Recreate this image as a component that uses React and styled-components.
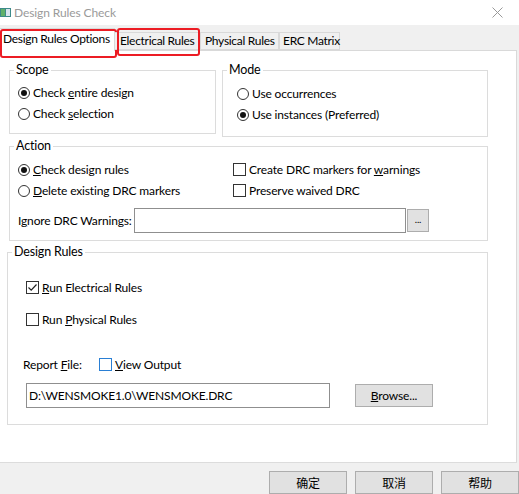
import React from "react";
import styled, { createGlobalStyle } from "styled-components";

const Global = createGlobalStyle`
  html, body { margin: 0; padding: 0; }
  body {
    width: 519px; height: 494px; overflow: hidden; background: #f0f0f0;
    font-family: "Lato", "Noto Sans CJK SC", sans-serif; font-size: 12px; color: #000;
    letter-spacing: -0.15px;
  }
  * { box-sizing: border-box; }
`;

const Window = styled.div`
  width: 519px; height: 494px; display: flex; flex-direction: column; overflow: hidden;
`;

const TitleBar = styled.div`
  height: 25px; background: #fff; display: flex; align-items: center;
  color: #9a9a9a; font-size: 12px; gap: 3px;
`;
const TitleText = styled.span` flex: 1; letter-spacing: -0.1px; `;
const CloseBtn = styled.div`
  width: 44px; height: 25px; display: flex; align-items: center; justify-content: center;
`;

const TabStrip = styled.div`
  height: 25px; display: flex; align-items: flex-end; position: relative; z-index: 1;
`;
const Tab = styled.div`
  position: relative;
  width: ${p => p.$w}px;
  height: ${p => (p.$active ? "23px" : "18px")};
  margin-bottom: ${p => (p.$active ? "-1px" : "0")};
  padding: ${p => (p.$active ? "0 0 2px" : "0")} ${p => p.$pad || 4}px;
  display: flex; align-items: center;
  background: ${p => (p.$active ? "#fff" : "#f0f0f0")};
  border: 1px solid #d9d9d9;
  border-bottom: ${p => (p.$active ? "none" : "1px solid #d9d9d9")};
  ${p => (p.$noleft || p.$first ? "border-left: none;" : "")}
  white-space: nowrap;
  letter-spacing: -0.3px;
`;
const Highlight = styled.div`
  position: absolute; left: ${p => p.$l}px; top: ${p => p.$t}px;
  width: ${p => p.$w}px; height: ${p => p.$h}px;
  border: 2px solid #ec1c24; border-radius: 3px; pointer-events: none;
`;

const Panel = styled.div`
  height: 414px; width: 517px; background: #fff;
  border-top: 1px solid #d9d9d9; border-right: 1px solid #d9d9d9; border-bottom: 1px solid #dcdcdc;
  display: flex; flex-direction: column;
`;

const Row = styled.div`
  display: flex; align-items: flex-start; margin-top: ${p => p.$mt || 0}px;
`;

const Group = styled.div`
  position: relative;
  margin-left: ${p => p.$ml || 0}px;
  width: ${p => p.$w}px;
  border: 1px solid #dcdcdc;
  padding: ${p => p.$pad};
  margin-top: ${p => p.$mt || 0}px;
`;
const Caption = styled.span`
  position: absolute; left: 4px; top: -9px; background: #fff; padding: 0 2px;
  line-height: 16px; font-size: 12.5px;
`;

const Option = styled.label`
  height: 21px; display: flex; align-items: center; gap: 3px; white-space: nowrap;
  margin-top: ${p => p.$mt || 0}px; margin-left: ${p => p.$ml || 0}px;
  padding-top: 1px;
`;

const RadioDot = styled.span`
  width: 12px; height: 12px; border-radius: 50%; border: 1px solid #333; background: #fff;
  display: inline-flex; align-items: center; justify-content: center; flex: none;
  &::after {
    content: ""; width: 6px; height: 6px; border-radius: 50%;
    background: ${p => (p.$on ? "#111" : "transparent")};
  }
`;
const Box = styled.span`
  width: 13px; height: 13px; border: 1px solid ${p => (p.$focus ? "#2a7fd4" : "#333")}; background: #fff;
  display: inline-flex; align-items: center; justify-content: center; flex: none;
`;

const TwoCol = styled.div`
  display: grid; grid-template-columns: 215px 1fr;
`;

const FieldRow = styled.div`
  display: flex; align-items: center; margin-top: ${p => p.$mt || 0}px;
  margin-left: ${p => p.$ml || 0}px;
`;
const FieldLabel = styled.span`
  width: ${p => p.$w}px; white-space: nowrap; flex: none;
`;
const Input = styled.div`
  width: ${p => p.$w}px; height: 25px; border: 1px solid #8f8f8f; background: #fff;
  display: flex; align-items: center; padding-left: 2px; flex: none;
`;
const Button = styled.div`
  width: ${p => p.$w}px; height: ${p => p.$h || 23}px; margin-left: ${p => p.$ml || 0}px;
  background: #e1e1e1; border: 1px solid #adadad; flex: none;
  display: flex; align-items: center; justify-content: center;
  font-family: ${p => (p.$cjk ? '"Noto Sans CJK SC", sans-serif' : "inherit")};
  font-size: ${p => p.$fs || 12}px;
  padding-bottom: ${p => p.$pb || 0}px;
`;

const Footer = styled.div`
  flex: 1; display: flex; justify-content: flex-end; gap: 8px; padding-top: 8px;
`;

const Radio = ({ on, children, ...rest }) => (
  <Option {...rest}><RadioDot $on={on} /><span>{children}</span></Option>
);
const Check = ({ on, focus, children, ...rest }) => (
  <Option {...rest}>
    <Box $focus={focus}>
      {on && (
        <svg width="11" height="11" viewBox="0 0 11 11"><path d="M1.5 5.5 L4.2 8.2 L9.5 2.5" fill="none" stroke="#222" strokeWidth="1.2" /></svg>
      )}
    </Box>
    <span>{children}</span>
  </Option>
);

export default function App() {
  return (
    <Window>
      <Global />
      <TitleBar>
        <svg width="11" height="11" viewBox="0 0 11 11">
          <rect x="0" y="1" width="11" height="9" fill="#3d8a8a" />
          <rect x="1" y="2" width="4" height="7" fill="#5fb06a" />
          <rect x="6" y="2" width="4" height="7" fill="#d8e4ef" />
        </svg>
        <TitleText>Design Rules Check</TitleText>
        <CloseBtn>
          <svg width="11" height="11" viewBox="0 0 11 11"><path d="M0.5 0.5 L10.5 10.5 M10.5 0.5 L0.5 10.5" stroke="#999" strokeWidth="1" /></svg>
        </CloseBtn>
      </TitleBar>
      <TabStrip>
        <Tab $active $first $w={115} $pad={3}>
          Design Rules Options
          <Highlight $l={0} $t={0} $w={117} $h={29} />
        </Tab>
        <Tab $noleft $w={85} $pad={5}>
          Electrical Rules
          <Highlight $l={2} $t={-5} $w={83} $h={28} />
        </Tab>
        <Tab $w={79} $pad={4}>Physical Rules</Tab>
        <Tab $w={61} $pad={3}>ERC Matrix</Tab>
      </TabStrip>
      <Panel>
        <Row $mt={19}>
          <Group $ml={9} $w={207} $pad="11px 8px 9px 8px">
            <Caption>Scope</Caption>
            <Radio on>Check <u>e</u>ntire design</Radio>
            <Radio>Check <u>s</u>election</Radio>
          </Group>
          <Group $ml={6} $w={266} $pad="12px 14px 11px 14px">
            <Caption>Mode</Caption>
            <Radio>Use occurrences</Radio>
            <Radio on>Use instances (Preferred)</Radio>
          </Group>
        </Row>
        <Group $ml={9} $w={479} $mt={9} $pad="12px 8px 7px 8px">
          <Caption>Action</Caption>
          <TwoCol>
            <Radio on><u>C</u>heck design rules</Radio>
            <Check>Create DRC markers for <u>w</u>arnings</Check>
            <Radio><u>D</u>elete existing DRC markers</Radio>
            <Check>Preserve waived DRC</Check>
          </TwoCol>
          <FieldRow $mt={7}>
            <FieldLabel $w={116}>I<u>g</u>nore DRC Warnings:</FieldLabel>
            <Input $w={272} />
            <Button $w={22} $ml={1} $fs={10} $pb={3}>...</Button>
          </FieldRow>
        </Group>
        <Group $ml={7} $w={481} $mt={11} $pad="24px 8px 16px 15px">
          <Caption>Design Rules</Caption>
          <Check on $ml={3}><u>R</u>un Electrical Rules</Check>
          <Check $ml={3} $mt={11}>Run <u>P</u>hysical Rules</Check>
          <FieldRow $mt={24}>
            <FieldLabel $w={76}>Report <u>F</u>ile:</FieldLabel>
            <Check focus><u>V</u>iew Output</Check>
          </FieldRow>
          <FieldRow $mt={8} $ml={3}>
            <Input $w={304}>D:\WENSMOKE1.0\WENSMOKE.DRC</Input>
            <Button $w={78} $ml={25}><span><u>B</u>rowse...</span></Button>
          </FieldRow>
        </Group>
      </Panel>
      <Footer>
        <Button $w={78} $cjk>确定</Button>
        <Button $w={78} $cjk>取消</Button>
        <Button $w={78} $cjk>帮助</Button>
      </Footer>
    </Window>
  );
}
